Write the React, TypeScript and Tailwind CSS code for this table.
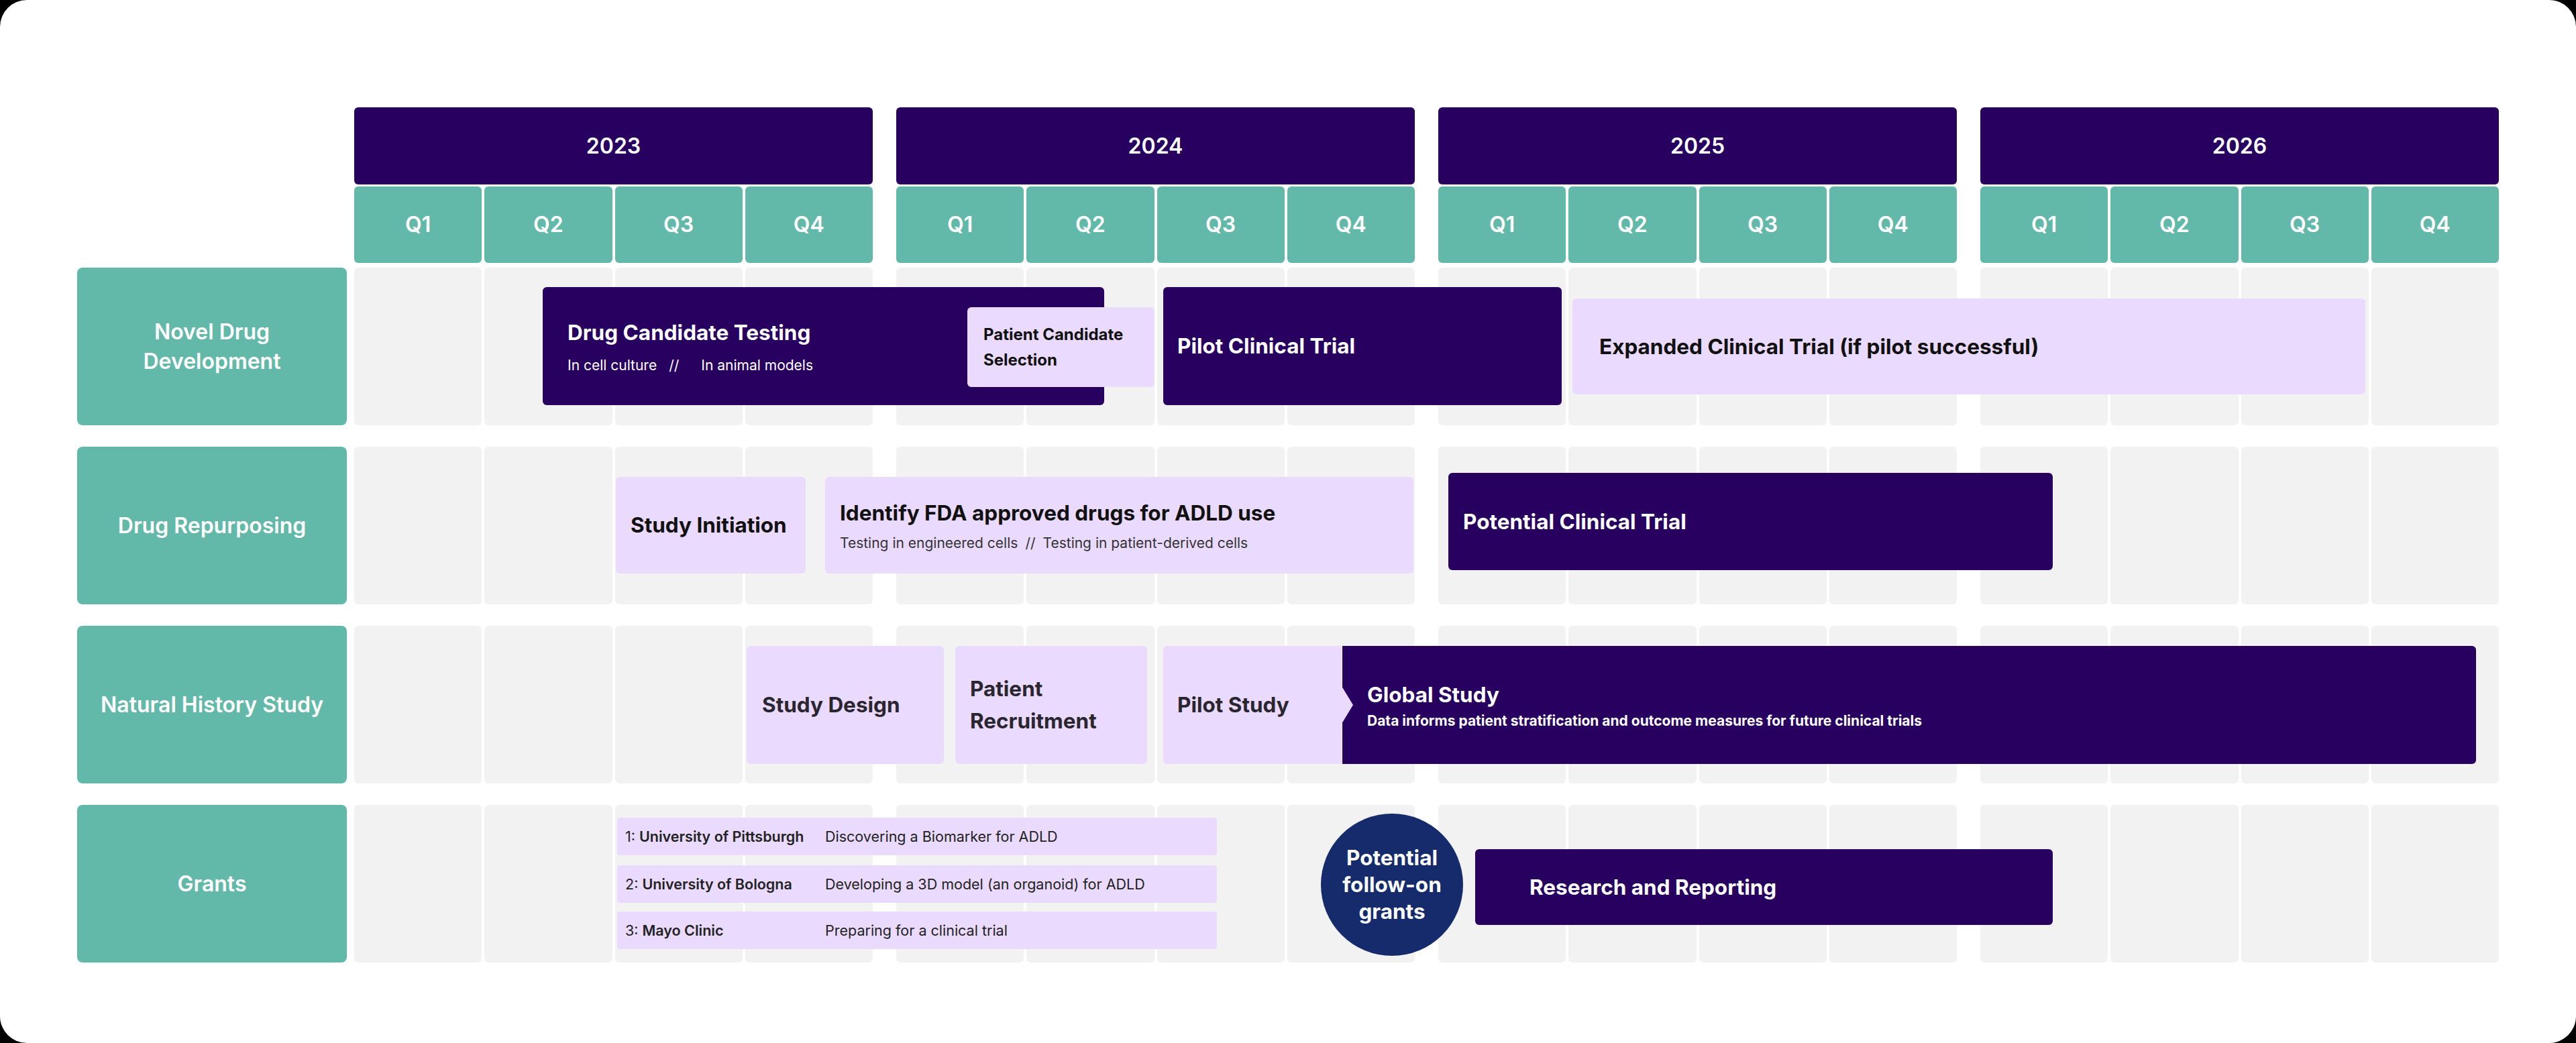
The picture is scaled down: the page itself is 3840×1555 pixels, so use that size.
import React from "react";

const years = ["2023", "2024", "2025", "2026"];
const quarters = ["Q1", "Q2", "Q3", "Q4"];

function RowLabel({ children }: { children: React.ReactNode }) {
  return (
    <div className="w-[402px] shrink-0 rounded-lg bg-[#63B9A9] flex items-center justify-center text-center text-white text-[32px] leading-[44px] font-semibold">
      {children}
    </div>
  );
}

// gray quarter cells behind each row
function Track({ children }: { children?: React.ReactNode }) {
  return (
    <div className="relative w-[3197px] h-full flex gap-[35px]">
      {years.map((y) => (
        <div key={y} className="w-[773px] flex gap-[4px]">
          {quarters.map((q) => (
            <div key={q} className="flex-1 rounded-md bg-[#F2F2F2]" />
          ))}
        </div>
      ))}
      {children}
    </div>
  );
}

function Row({ label, children }: { label: React.ReactNode; children?: React.ReactNode }) {
  return (
    <div className="flex gap-[11px] h-[235px]">
      <RowLabel>{label}</RowLabel>
      <Track>{children}</Track>
    </div>
  );
}

function Grant({ num, name, desc, className }: { num: string; name: string; desc: string; className: string }) {
  return (
    <div className={"absolute left-[392px] w-[894px] h-[56px] rounded-sm bg-[#EADAFD] flex items-center pl-[12px] text-[21.5px] text-[#222]" + " " + className}>
      <span className="w-[298px] shrink-0">
        {num}: <span className="font-semibold">{name}</span>
      </span>
      <span>{desc}</span>
    </div>
  );
}

export default function App() {
  return (
    <div className="min-h-[1555px] w-full bg-black font-['Inter',sans-serif]">
      <div className="h-[1555px] w-full rounded-[40px] bg-white pl-[115px] pt-[160px]">
        {/* Header: years + quarters */}
        <div className="flex">
          <div className="w-[413px] shrink-0" />
          <div className="flex gap-[35px]">
            {years.map((y) => (
              <div key={y} className="w-[773px] flex flex-col gap-[3px]">
                <div className="h-[115px] rounded-md bg-[#28005F] flex items-center justify-center text-white text-[32px] font-semibold">
                  {y}
                </div>
                <div className="h-[114px] flex gap-[4px]">
                  {quarters.map((q) => (
                    <div key={q} className="flex-1 rounded-md bg-[#63B9A9] flex items-center justify-center text-white text-[32px] font-semibold">
                      {q}
                    </div>
                  ))}
                </div>
              </div>
            ))}
          </div>
        </div>

        <div className="mt-[7px] flex flex-col gap-[32px]">
          {/* Novel Drug Development */}
          <Row label={<span>Novel Drug<br />Development</span>}>
            <div className="absolute left-[281px] top-[29px] w-[837px] h-[176px] rounded-md bg-[#28005F] flex flex-col justify-center pl-[37px] text-white">
              <div className="text-[31.5px] leading-[48px] font-bold">Drug Candidate Testing</div>
              <div className="mt-[10px] text-[21px] leading-[30px]">
                In cell culture<span className="ml-[18px] mr-[33px]">//</span>In animal models
              </div>
            </div>
            <div className="absolute left-[914px] top-[59px] w-[279px] h-[119px] rounded-md bg-[#EADAFD] flex items-center pl-[24px] text-[#111] text-[24px] leading-[38px] font-bold">
              Patient Candidate<br />Selection
            </div>
            <div className="absolute left-[1206px] top-[29px] w-[594px] h-[176px] rounded-md bg-[#28005F] flex items-center pl-[21px] text-white text-[31.5px] font-bold">
              Pilot Clinical Trial
            </div>
            <div className="absolute left-[1816px] top-[46px] w-[1182px] h-[143px] rounded-md bg-[#EADAFD] flex items-center pl-[40px] text-[#111] text-[31.5px] font-bold">
              Expanded Clinical Trial (if pilot successful)
            </div>
          </Row>

          {/* Drug Repurposing */}
          <Row label="Drug Repurposing">
            <div className="absolute left-[390px] top-[45px] w-[283px] h-[144px] rounded-md bg-[#EADAFD] flex items-center pl-[22px] text-[#111] text-[31.5px] font-bold">
              Study Initiation
            </div>
            <div className="absolute left-[702px] top-[45px] w-[877px] h-[144px] rounded-md bg-[#EADAFD] flex flex-col justify-center pl-[22px]">
              <div className="text-[#111] text-[31.5px] leading-[48px] font-bold">Identify FDA approved drugs for ADLD use</div>
              <div className="mt-[6px] text-[#333] text-[21px] leading-[30px]">
                Testing in engineered cells<span className="mx-[11px]">//</span>Testing in patient-derived cells
              </div>
            </div>
            <div className="absolute left-[1631px] top-[39px] w-[901px] h-[145px] rounded-md bg-[#28005F] flex items-center pl-[22px] text-white text-[31.5px] font-bold">
              Potential Clinical Trial
            </div>
          </Row>

          {/* Natural History Study */}
          <Row label="Natural History Study">
            <div className="absolute left-[585px] top-[30px] w-[294px] h-[176px] rounded-md bg-[#EADAFD] flex items-center pl-[23px] text-[#2A2630] text-[31.5px] font-bold">
              Study Design
            </div>
            <div className="absolute left-[896px] top-[30px] w-[286px] h-[176px] rounded-md bg-[#EADAFD] flex items-center pl-[22px] text-[#2A2630] text-[31.5px] leading-[48px] font-bold">
              Patient<br />Recruitment
            </div>
            <div className="absolute left-[1473px] top-[30px] w-[1690px] h-[176px] rounded-r-md bg-[#28005F] flex flex-col justify-center pl-[37px] text-white">
              <div className="text-[31.5px] leading-[48px] font-bold">Global Study</div>
              <div className="text-[21px] leading-[30px] font-bold">
                Data informs patient stratification and outcome measures for future clinical trials
              </div>
            </div>
            <div className="absolute z-10 left-[1206px] top-[30px] w-[266px] h-[176px] rounded-l-md bg-[#EADAFD] flex items-center pl-[21px] text-[#2A2630] text-[31.5px] font-bold">
              Pilot Study
              <div className="absolute left-full top-1/2 -translate-y-1/2 w-[17px] h-[56px] bg-[#EADAFD] [clip-path:polygon(0_0,100%_50%,0_100%)]" />
            </div>
          </Row>

          {/* Grants */}
          <Row label="Grants">
            <Grant className="top-[19px]" num="1" name="University of Pittsburgh" desc="Discovering a Biomarker for ADLD" />
            <Grant className="top-[90px]" num="2" name="University of Bologna" desc="Developing a 3D model (an organoid) for ADLD" />
            <Grant className="top-[159px]" num="3" name="Mayo Clinic" desc="Preparing for a clinical trial" />
            <div className="absolute z-10 left-[1441px] top-[13px] w-[212px] h-[212px] rounded-full bg-[#152B6C] flex items-center justify-center text-center text-white text-[31.5px] leading-[40px] font-bold">
              Potential<br />follow-on<br />grants
            </div>
            <div className="absolute left-[1671px] top-[66px] w-[861px] h-[113px] rounded-md bg-[#28005F] flex items-center pl-[81px] text-white text-[31.5px] font-bold">
              Research and Reporting
            </div>
          </Row>
        </div>
      </div>
    </div>
  );
}
